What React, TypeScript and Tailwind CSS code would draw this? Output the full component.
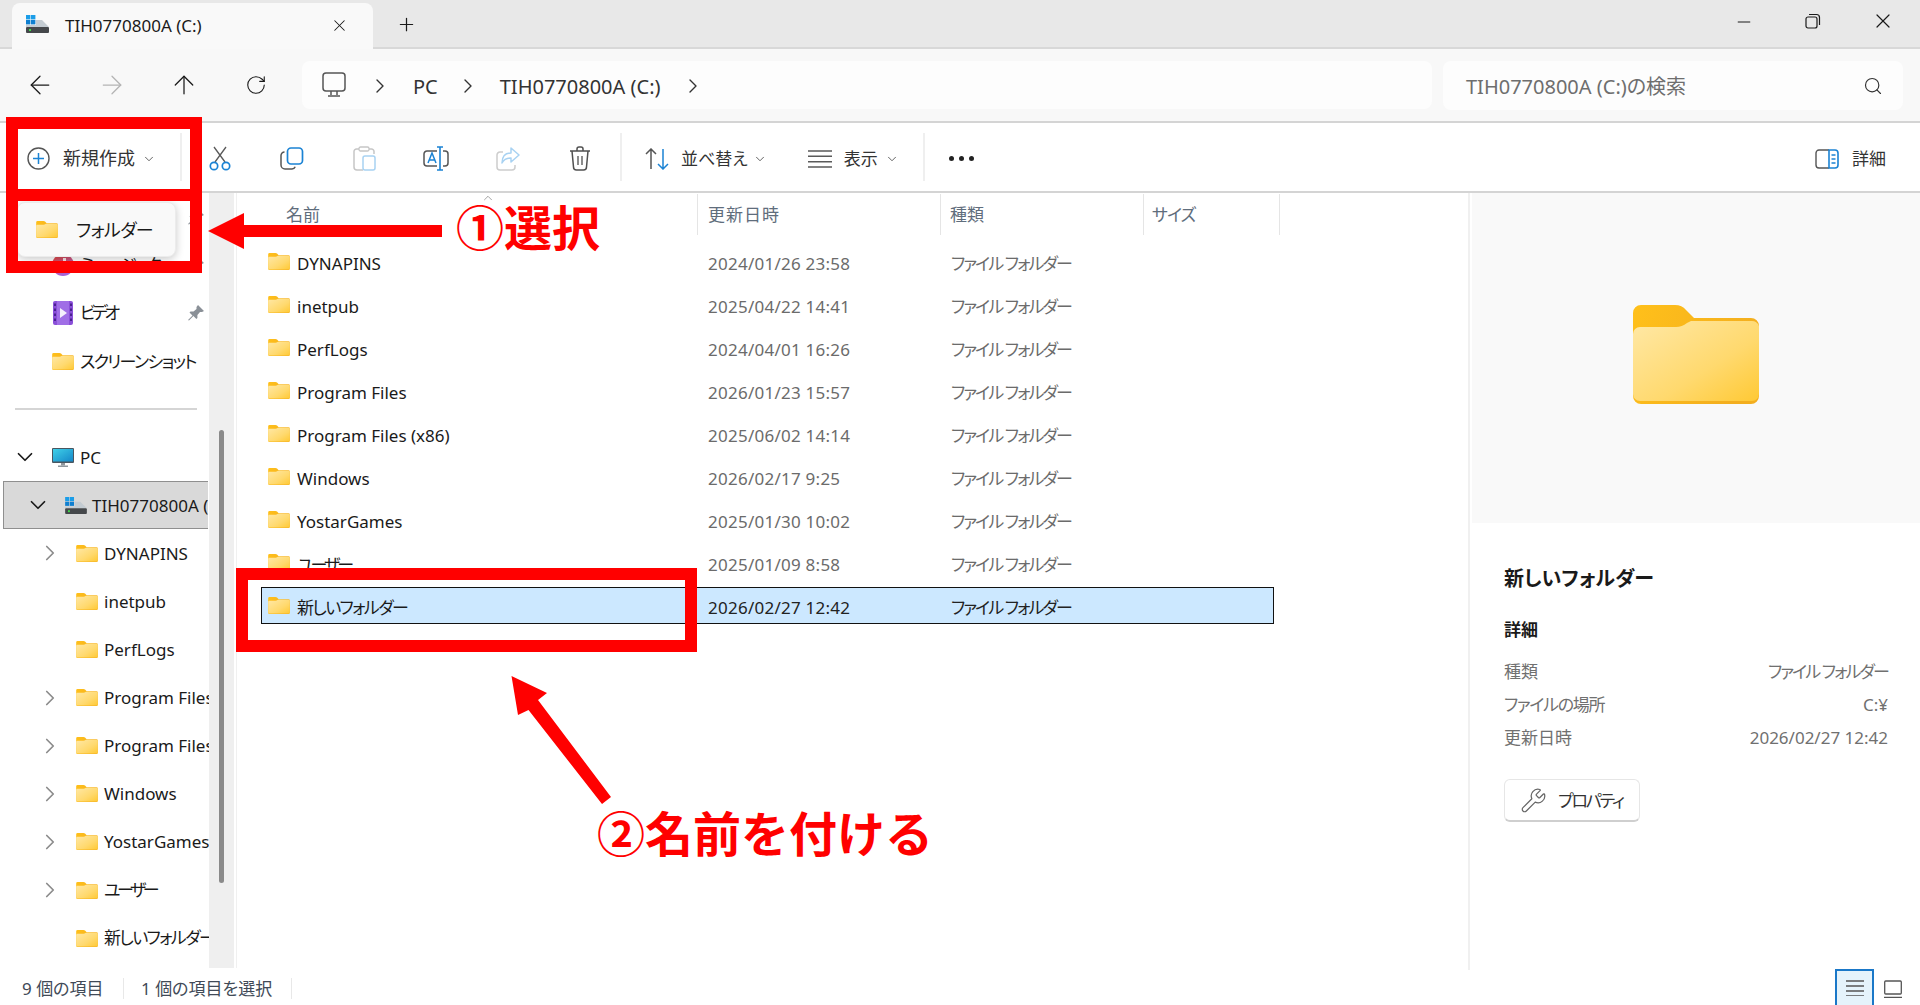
import React from 'react';
import { ArrowLeft, ArrowRight, ArrowUp, ChevronDown, ChevronRight, ChevronUp, RotateCw, Search, X, Plus, Minus, Wrench } from 'lucide-react';

const Folder = ({ className }: { className: string }) => (
  <svg viewBox="0 0 126 99" className={className}>
    <defs>
      <linearGradient id="folderFront" x1="0" y1="0" x2="1" y2="1">
        <stop offset="0" stopColor="#ffe8a6" />
        <stop offset="0.6" stopColor="#ffd96e" />
        <stop offset="1" stopColor="#ffc934" />
      </linearGradient>
      <linearGradient id="folderBack" x1="0" y1="0" x2="1" y2="0.3">
        <stop offset="0" stopColor="#ffc01a" />
        <stop offset="1" stopColor="#f3ae1f" />
      </linearGradient>
    </defs>
    <path d="M0 8a8 8 0 0 1 8-8h34q7 0 11 5l8 8h57a8 8 0 0 1 8 8v70a8 8 0 0 1-8 8H8a8 8 0 0 1-8-8z" fill="url(#folderBack)" />
    <path d="M0 29a7 7 0 0 1 7-7h36q6 0 11-4l4-2h60a8 8 0 0 1 8 5v68a7 7 0 0 1-7 7H7a7 7 0 0 1-7-7z" fill="url(#folderFront)" />
  </svg>
);

const Drive = ({ className }: { className: string }) => (
  <svg viewBox="0 0 23 18" className={className}>
    <rect x="0" y="0" width="4.4" height="4.4" fill="#1b9de8" />
    <rect x="5" y="0" width="4.4" height="4.4" fill="#1b9de8" />
    <rect x="0" y="5" width="4.4" height="4.4" fill="#0f7fd0" />
    <rect x="5" y="5" width="4.4" height="4.4" fill="#0f7fd0" />
    <path d="M10 5h6l7 7H0v-2h10z" fill="#c4ccd2" />
    <rect x="0" y="12" width="23" height="6" rx="1" fill="#45484b" />
    <rect x="3" y="14" width="2" height="2" fill="#3fdc4a" />
  </svg>
);

const PcIcon = () => (
  <svg viewBox="0 0 22 19" className="w-[22px] h-[19px] shrink-0">
    <defs>
      <linearGradient id="pcScreen" x1="0" y1="0" x2="1" y2="1">
        <stop offset="0" stopColor="#3fd0e8" />
        <stop offset="1" stopColor="#1587c8" />
      </linearGradient>
    </defs>
    <rect x="0" y="0" width="22" height="15" rx="1" fill="#4a5660" />
    <rect x="1" y="1" width="20" height="12.5" fill="url(#pcScreen)" />
    <rect x="9" y="15" width="4" height="2.5" fill="#8f979d" />
    <rect x="6" y="17.5" width="10" height="1.5" fill="#8f979d" />
  </svg>
);

const VideoIcon = () => (
  <svg viewBox="0 0 20 24" className="w-[20px] h-[24px] shrink-0">
    <rect width="20" height="24" rx="2" fill="#8a4fd8" />
    <rect x="4" y="0" width="12" height="24" fill="#a06ee6" />
    {[2.5, 7.5, 12.5, 17.5].map((y) => (
      <g key={y}>
        <rect x="1" y={y} width="2" height="2.5" fill="#4a2390" />
        <rect x="17" y={y} width="2" height="2.5" fill="#4a2390" />
      </g>
    ))}
    <path d="M7 7l7 5-7 5z" fill="#f4f0fc" />
  </svg>
);

const MusicIcon = () => (
  <svg viewBox="0 0 22 24" className="w-[22px] h-[24px] shrink-0">
    <defs>
      <linearGradient id="musicBall" x1="0" y1="0" x2="0.4" y2="1">
        <stop offset="0" stopColor="#e8452c" />
        <stop offset="1" stopColor="#a463d8" />
      </linearGradient>
    </defs>
    <circle cx="11" cy="12" r="11" fill="url(#musicBall)" />
    <path d="M11 5h3v9a3 3 0 1 1-3-3z" fill="#f7e4e4" />
  </svg>
);

const PinIcon = () => (
  <svg viewBox="0 0 16 16" className="w-4 h-4 shrink-0">
    <path d="M10 0l6 6-2 1-2 0-2.6 3 0 3-1 1-3-3L1 15.5 0 15l4.5-4.5-3-3 1-1 3 0L8.5 4V2z" fill="#8a9097" />
  </svg>
);

const ScissorsIcon = () => (
  <svg viewBox="0 0 22 25" className="w-[22px] h-[25px]" fill="none">
    <path d="M5 1l11 15M17 1L6 16" stroke="#5a5a5a" strokeWidth="1.3" />
    <circle cx="5" cy="20" r="3.7" stroke="#1b83d4" strokeWidth="1.7" />
    <circle cx="17" cy="20" r="3.7" stroke="#1b83d4" strokeWidth="1.7" />
  </svg>
);

const CopyIcon = () => (
  <svg viewBox="0 0 24 23" className="w-[24px] h-[23px]" fill="none">
    <rect x="7.5" y="1" width="15" height="16" rx="3.5" stroke="#1b83d4" strokeWidth="1.7" />
    <path d="M4.5 5A3.5 3.5 0 0 0 1 8.500V18a4 4 0 0 0 4 4h7a3.500 3.500 0 0 0 3.200-2.200" stroke="#555" strokeWidth="1.500" />
  </svg>
);

const PasteIcon = () => (
  <svg viewBox="0 0 23 25" className="w-[23px] h-[25px]" fill="none">
    <path d="M6 3H3.500A2.500 2.500 0 0 0 1 5.500V21a3 3 0 0 0 3 3h6M16 3h2.500A2.500 2.500 0 0 1 21 5.500V8" stroke="#c6c6c6" strokeWidth="1.500" />
    <rect x="6" y="1" width="10" height="4" rx="1.500" stroke="#c6c6c6" strokeWidth="1.300" />
    <rect x="10" y="10" width="12" height="14" rx="2" stroke="#a8d2f2" strokeWidth="1.500" />
  </svg>
);

const RenameIcon = () => (
  <svg viewBox="0 0 26 25" className="w-[26px] h-[25px]" fill="none">
    <path d="M14 5H4a3 3 0 0 0-3 3v9a3 3 0 0 0 3 3h10M20 5h2a3 3 0 0 1 3 3v9a3 3 0 0 1-3 3h-2" stroke="#555" strokeWidth="1.500" />
    <path d="M5 17l4-10 4 10M6.500 14h5" stroke="#1b83d4" strokeWidth="1.500" />
    <path d="M17 1v23M14 1h6M14 24h6" stroke="#1b83d4" strokeWidth="1.600" />
  </svg>
);

const ShareIcon = () => (
  <svg viewBox="0 0 24 24" className="w-[24px] h-[24px]" fill="none">
    <path d="M7 5H4a3 3 0 0 0-3 3v12a3 3 0 0 0 3 3h12a3 3 0 0 0 3-3v-2" stroke="#cdcdcd" strokeWidth="1.500" />
    <path d="M15 1l8 7-8 7v-4c-4 0-7 1-9 5 0-6 3-10 9-10z" stroke="#a8d2f2" strokeWidth="1.500" strokeLinejoin="round" />
  </svg>
);

const TrashIcon = () => (
  <svg viewBox="0 0 22 25" className="w-[22px] h-[25px]" fill="none" stroke="#505050" strokeWidth="1.500">
    <path d="M1 5h20M8 5V3a2 2 0 0 1 2-2h2a2 2 0 0 1 2 2v2" />
    <path d="M3 5l1.500 16a3 3 0 0 0 3 3h7a3 3 0 0 0 3-3L19 5" />
    <path d="M9 10v9M13 10v9" strokeWidth="1.300" />
  </svg>
);

const SortIcon = () => (
  <svg viewBox="0 0 24 22" className="w-[24px] h-[22px]" fill="none" strokeWidth="1.500">
    <path d="M6 21V1M1 6l5-5 5 5" stroke="#555" />
    <path d="M18 1v20M13 16l5 5 5-5" stroke="#1b83d4" />
  </svg>
);

const ViewIcon = () => (
  <svg viewBox="0 0 24 18" className="w-[24px] h-[18px]" fill="none" stroke="#5a5a5a" strokeWidth="1.400">
    <path d="M0 1h24M0 6.300h24M0 11.700h24M0 17h24" />
  </svg>
);

const DetailPaneIcon = () => (
  <svg viewBox="0 0 24 20" className="w-[24px] h-[20px]" fill="none">
    <path d="M14 1H4a3 3 0 0 0-3 3v12a3 3 0 0 0 3 3h10" stroke="#555" strokeWidth="1.400" />
    <path d="M14 1h6a3 3 0 0 1 3 3v12a3 3 0 0 1-3 3h-6z" stroke="#1b83d4" strokeWidth="1.600" />
    <path d="M16.500 6h4M16.500 10h4M16.500 14h4" stroke="#1b83d4" strokeWidth="1.500" />
  </svg>
);

const RestoreIcon = () => (
  <svg viewBox="0 0 16 16" className="w-4 h-4" fill="none" stroke="#1a1a1a" strokeWidth="1.200">
    <rect x="1" y="4" width="11" height="11" rx="2" />
    <path d="M4 1.500h7.500a3 3 0 0 1 3 3V12" />
  </svg>
);

const navRows = [
  { label: 'ピクチャ', icon: 'none', pin: true, cls: 'tracking-[-1.6px]' },
  { label: 'ミュージック', icon: 'music', pin: true, cls: 'tracking-[-1.6px]' },
  { label: 'ビデオ', icon: 'video', pin: true, cls: 'tracking-[-3.5px]' },
  { label: 'スクリーンショット', icon: 'folder', pin: false, cls: 'tracking-[-1.6px]' },
];

const treeRows = [
  { label: 'DYNAPINS', chevron: true, cls: '' },
  { label: 'inetpub', chevron: false, cls: '' },
  { label: 'PerfLogs', chevron: false, cls: '' },
  { label: 'Program Files', chevron: true, cls: '' },
  { label: 'Program Files (x86)', chevron: true, cls: '' },
  { label: 'Windows', chevron: true, cls: '' },
  { label: 'YostarGames', chevron: true, cls: '' },
  { label: 'ユーザー', chevron: true, cls: 'tracking-[-3.5px]' },
  { label: '新しいフォルダー', chevron: false, cls: 'tracking-[-1.6px]' },
];

const files = [
  { name: 'DYNAPINS', date: '2024/01/26 23:58', cls: '' },
  { name: 'inetpub', date: '2025/04/22 14:41', cls: '' },
  { name: 'PerfLogs', date: '2024/04/01 16:26', cls: '' },
  { name: 'Program Files', date: '2026/01/23 15:57', cls: '' },
  { name: 'Program Files (x86)', date: '2025/06/02 14:14', cls: '' },
  { name: 'Windows', date: '2026/02/17 9:25', cls: '' },
  { name: 'YostarGames', date: '2025/01/30 10:02', cls: '' },
  { name: 'ユーザー', date: '2025/01/09 8:58', cls: 'tracking-[-3px]' },
  { name: '新しいフォルダー', date: '2026/02/27 12:42', cls: 'tracking-[-1.6px]', selected: true },
];

const details = [
  { k: '種類', v: 'ファイル フォルダー', kc: '', vc: 'tracking-[-1.9px]' },
  { k: 'ファイルの場所', v: 'C:¥', kc: 'tracking-[-1.3px]', vc: '' },
  { k: '更新日時', v: '2026/02/27 12:42', kc: '', vc: '' },
];

const App: React.FC = () => {
  return (
    <div className="relative w-[1920px] h-[1005px] overflow-hidden bg-white text-[17px] text-[#1a1a1a] font-['Noto_Sans','Noto_Sans_CJK_JP',sans-serif] [font-feature-settings:'palt']">
      {/* title bar */}
      <div className="flex items-end h-[49px] bg-[#e8e8e8] border-b-2 border-[#d8d8d8]">
        <div className="relative flex items-center w-[361px] h-[46px] ml-[12px] -mb-[2px] pl-[14px] bg-[#f9f9f9] rounded-t-lg">
          <Drive className="w-[23px] h-[18px] -mt-[5px]" />
          <span className="ml-[16px] text-[17px] -mt-[1px]">TIH0770800A (C:)</span>
          <X size={19} strokeWidth={1.3} className="ml-auto mr-[24px] -mt-[2px]" />
        </div>
        <Plus size={21} strokeWidth={1.4} className="ml-[23px] mb-[12px]" />
        <div className="flex items-center ml-auto h-full">
          <Minus size={20} strokeWidth={1.2} className="mr-[51px] -mt-[4px]" />
          <div className="mr-[50px] -mt-[6px]"><RestoreIcon /></div>
          <X size={24} strokeWidth={1.2} className="mr-[25px] -mt-[6px]" />
        </div>
      </div>

      {/* address bar */}
      <div className="flex items-center h-[74px] bg-[#f8f8f8] border-b-2 border-[#d4d4d4]">
        <div className="flex items-center justify-center w-[72px] ml-[4px]"><ArrowLeft size={30} strokeWidth={1} /></div>
        <div className="flex items-center justify-center w-[72px]"><ArrowRight size={30} strokeWidth={1} className="text-[#b4b4b4]" /></div>
        <div className="flex items-center justify-center w-[72px]"><ArrowUp size={30} strokeWidth={1} /></div>
        <div className="flex items-center justify-center w-[72px]"><RotateCw size={22} strokeWidth={1.2} /></div>
        <div className="flex items-center w-[1130px] h-[48px] ml-[10px] pl-[20px] bg-[#fdfdfd] rounded-lg text-[20px] text-[#333]">
          <svg viewBox="0 0 24 25" className="w-[24px] h-[25px] -mt-[1px]" fill="none" stroke="#555" strokeWidth="1.500">
            <rect x="1" y="1" width="22" height="18" rx="3" />
            <path d="M9 19v4M15 19v4M6 24h12" />
          </svg>
          <ChevronRight size={24} strokeWidth={1.4} className="ml-[22px] mt-[2px]" />
          <span className="ml-[21px] mt-[3px]">PC</span>
          <ChevronRight size={24} strokeWidth={1.4} className="ml-[18px] mt-[2px]" />
          <span className="ml-[20px] mt-[3px]">TIH0770800A (C:)</span>
          <ChevronRight size={24} strokeWidth={1.4} className="ml-[20px] mt-[2px]" />
        </div>
        <div className="flex items-center w-[460px] h-[49px] ml-[11px] pl-[23px] pr-[20px] bg-[#fdfdfd] rounded-lg text-[20px] text-[#6e6e6e]">
          <span className="mt-[3px]">TIH0770800A (C:)の検索</span>
          <Search size={20} strokeWidth={1.4} className="ml-auto mt-[1px] text-[#333]" />
        </div>
      </div>

      {/* command bar */}
      <div className="flex items-center h-[70px] pt-[3px] bg-white border-b-2 border-[#d4d4d4] text-[#333]">
        <div className="flex items-center w-[180px] pl-[27px]">
          <svg viewBox="0 0 23 23" className="w-[23px] h-[23px] shrink-0" fill="none">
            <circle cx="11.500" cy="11.500" r="10.500" stroke="#555" strokeWidth="1.400" />
            <path d="M11.500 6v11M6 11.500h11" stroke="#1b83d4" strokeWidth="1.500" />
          </svg>
          <span className="ml-[13px] text-[18px]">新規作成</span>
          <ChevronDown size={14} strokeWidth={1.3} className="ml-[7px]" />
        </div>
        <div className="w-[2px] h-[48px] -mt-[3px] bg-[#efefef]" />
        <div className="flex items-center ml-[2px]">
          {[<ScissorsIcon />, <CopyIcon />, <PasteIcon />, <RenameIcon />, <ShareIcon />, <TrashIcon />].map((icon, i) => (
            <div key={i} className="flex items-center justify-center w-[72px]">{icon}</div>
          ))}
        </div>
        <div className="w-[2px] h-[48px] ml-[4px] -mt-[3px] bg-[#efefef]" />
        <div className="flex items-center ml-[23px]">
          <SortIcon />
          <span className="ml-[12px] text-[17px]">並べ替え</span>
          <ChevronDown size={14} strokeWidth={1.3} className="ml-[5px]" />
        </div>
        <div className="flex items-center ml-[41px]">
          <ViewIcon />
          <span className="ml-[12px] text-[17px]">表示</span>
          <ChevronDown size={14} strokeWidth={1.3} className="ml-[7px]" />
        </div>
        <div className="w-[2px] h-[48px] ml-[24px] -mt-[3px] bg-[#efefef]" />
        <div className="flex items-center gap-[5px] ml-[24px]">
          <span className="w-[5px] h-[5px] rounded-full bg-[#222]" />
          <span className="w-[5px] h-[5px] rounded-full bg-[#222]" />
          <span className="w-[5px] h-[5px] rounded-full bg-[#222]" />
        </div>
        <div className="flex items-center ml-auto mr-[34px]">
          <DetailPaneIcon />
          <span className="ml-[13px] text-[17px]">詳細</span>
        </div>
      </div>

      {/* main */}
      <div className="flex h-[777px]">
        <div className="w-[209px] shrink-0 overflow-hidden">
          {navRows.map((r) => (
            <div key={r.label} className="flex items-center h-[48.1px] pl-[52px] pr-[5px]">
              <div className="flex justify-center w-[22px] shrink-0">
                {r.icon === 'music' && <MusicIcon />}
                {r.icon === 'video' && <VideoIcon />}
                {r.icon === 'folder' && <Folder className="w-[22px] h-[17px] shrink-0" />}
              </div>
              <span className={`ml-[6px] whitespace-nowrap ${r.cls}`}>{r.label}</span>
              {r.pin && <span className="ml-auto"><PinIcon /></span>}
            </div>
          ))}
          <div className="h-[48px] flex items-center pl-[15px]">
            <div className="w-[182px] h-[2px] bg-[#d5d5d5]" />
          </div>
          <div className="flex items-center h-[48px] pl-[12px]">
            <ChevronDown size={26} strokeWidth={1.6} className="shrink-0" />
            <span className="ml-[14px]"><PcIcon /></span>
            <span className="ml-[6px]">PC</span>
          </div>
          <div className="flex items-center w-[205px] h-[48px] ml-[3px] pl-[21px] bg-[#d9d9d9] border border-r-0 border-[#8f8f8f] overflow-hidden">
            <ChevronDown size={26} strokeWidth={1.6} className="shrink-0" />
            <span className="ml-[14px] shrink-0"><Drive className="w-[22px] h-[17px]" /></span>
            <span className="ml-[5px] whitespace-nowrap">TIH0770800A (C:)</span>
          </div>
          {treeRows.map((r) => (
            <div key={r.label} className="flex items-center h-[48.1px] pl-[37px]">
              <span className="w-[26px] shrink-0">
                {r.chevron && <ChevronRight size={26} strokeWidth={1.6} className="text-[#8c8c8c]" />}
              </span>
              <span className="ml-[13px]"><Folder className="w-[22px] h-[17px]" /></span>
              <span className={`ml-[6px] whitespace-nowrap ${r.cls}`}>{r.label}</span>
            </div>
          ))}
        </div>

        <div className="relative w-[25px] h-[775px] shrink-0 bg-[#efefef]">
          <div className="absolute left-[10px] top-[237px] w-[5px] h-[453px] rounded-full bg-[#8a8a8a]" />
        </div>
        <div className="w-[1px] h-[775px] shrink-0 ml-[2px] bg-[#f0f0f0]" />

        {/* file list */}
        <div className="w-[1231px] shrink-0">
          <div className="relative flex h-[42px] pt-[1px] text-[#5f6d7c]">
            <ChevronUp size={14} strokeWidth={1} className="absolute left-[244px] -top-[2px] text-[#666]" />
            <div className="flex items-center w-[461px] pl-[49px] border-r border-[#e5e5e5]">名前</div>
            <div className="flex items-center w-[243px] pl-[10px] border-r border-[#e5e5e5] tracking-[1px]">更新日時</div>
            <div className="flex items-center w-[203px] pl-[9px] border-r border-[#e5e5e5]">種類</div>
            <div className="flex items-center w-[136px] pl-[8px] border-r border-[#e5e5e5] tracking-[-1px]">サイズ</div>
          </div>
          <div className="flex flex-col pt-[6.5px] pl-[24px]">
            {files.map((f) => (
              <div
                key={f.name}
                className={`flex items-center w-[1013px] h-[37px] mt-[1.5px] mb-[4.5px] pt-[4px] border ${f.selected ? 'bg-[#cce8ff] border-[#111]' : 'border-transparent'}`}
              >
                <div className="flex items-center w-[446px] pl-[6px]">
                  <Folder className="w-[22px] h-[17px] -mt-[4px]" />
                  <span className={`ml-[7px] ${f.cls}`}>{f.name}</span>
                </div>
                <div className={`w-[243px] tracking-[0.25px] ${f.selected ? 'text-[#222]' : 'text-[#6b6b6b]'}`}>{f.date}</div>
                <div className={`tracking-[-1.9px] ${f.selected ? 'text-[#222]' : 'text-[#6b6b6b]'}`}>ファイル フォルダー</div>
              </div>
            ))}
          </div>
        </div>

        {/* details pane */}
        <div className="flex-1 border-l-2 border-[#f0f0f0] pl-[2px]">
          <div className="flex items-center justify-center h-[330px] pb-[8px] bg-[#f9f9f9]">
            <Folder className="w-[126px] h-[99px]" />
          </div>
          <div className="pl-[32px] pr-[32px]">
            <div className="mt-[41px] h-[30px] text-[20px] font-semibold leading-[30px]">新しいフォルダー</div>
            <div className="mt-[24px] h-[24px] text-[17px] font-semibold leading-[24px]">詳細</div>
            <div className="mt-[13px] text-[#707070]">
              {details.map((d) => (
                <div key={d.k} className="flex items-center justify-between h-[33px]">
                  <span className={d.kc}>{d.k}</span>
                  <span className={d.vc}>{d.v}</span>
                </div>
              ))}
            </div>
            <div className="flex items-center w-[136px] h-[43px] mt-[25px] pl-[15px] bg-white border border-[#e6e6e6] border-b-2 border-b-[#cfcfcf] rounded-md text-[#333]">
              <Wrench size={27} strokeWidth={1.1} className="text-[#666]" />
              <span className="ml-[11px] mt-[2px] tracking-[-2.2px]">プロパティ</span>
            </div>
          </div>
        </div>
      </div>

      {/* status bar */}
      <div className="flex items-center h-[35px] pl-[22px] pt-[2px] text-[#414a57]">
        <span className="w-[101px] whitespace-nowrap">9 個の項目</span>
        <span className="w-[1px] h-[21px] bg-[#e8e8e8]" />
        <span className="w-[150px] ml-[17px] whitespace-nowrap">1 個の項目を選択</span>
        <span className="w-[1px] h-[21px] bg-[#e8e8e8]" />
        <div className="flex items-center justify-center w-[39px] h-[36px] ml-auto -mt-[3px] bg-[#e5f3fb] border-2 border-b-0 border-[#1a78c8]">
          <svg viewBox="0 0 18 16" className="w-[18px] h-[16px]" fill="none" stroke="#555" strokeWidth="1.300">
            <path d="M0 1h18M0 6h18M0 11h18M0 16h18" />
          </svg>
        </div>
        <svg viewBox="0 0 18 18" className="w-[18px] h-[18px] ml-[10px] mr-[18px]" fill="none" stroke="#555" strokeWidth="1.300">
          <rect x="0.700" y="1" width="16.600" height="13" rx="1" />
          <path d="M0 17.400h18" />
        </svg>
      </div>

      {/* dropdown popup */}
      <div className="absolute left-[17px] top-[202px] flex items-center w-[159px] h-[55px] pl-[18px] bg-[#f9f9f9] rounded-lg border border-[#ececec] shadow-[0_2px_8px_rgba(0,0,0,0.22)] text-[18px]">
        <Folder className="w-[22px] h-[17px]" />
        <span className="ml-[18px] mt-[2px] tracking-[-0.6px]">フォルダー</span>
      </div>

      {/* red annotations */}
      <div className="absolute left-[6px] top-[117px] w-[196px] h-[84px] border-[12px] border-[#ff0000]" />
      <div className="absolute left-[6px] top-[189px] w-[196px] h-[84px] border-[12px] border-[#ff0000]" />
      <div className="absolute left-[236px] top-[568px] w-[461px] h-[84px] border-[12px] border-[#ff0000]" />

      <svg viewBox="0 0 1920 1005" className="absolute inset-0 w-[1920px] h-[1005px] pointer-events-none">
        <polygon points="208,231 244,213 244,225 442,225 442,237 244,237 244,249" fill="#ff0000" />
        <polygon points="511.500,676 547,693 538,700 611,797 602,804 528.500,710 518,715" fill="#ff0000" />
      </svg>
      <div className="absolute left-[456px] top-[193px] text-[48px] font-bold leading-[70px] text-[#ff0000] [font-feature-settings:normal]">①選択</div>
      <div className="absolute left-[597px] top-[799px] text-[48px] font-bold leading-[70px] text-[#ff0000] [font-feature-settings:normal]">②名前を付ける</div>
    </div>
  );
};

export default App;
